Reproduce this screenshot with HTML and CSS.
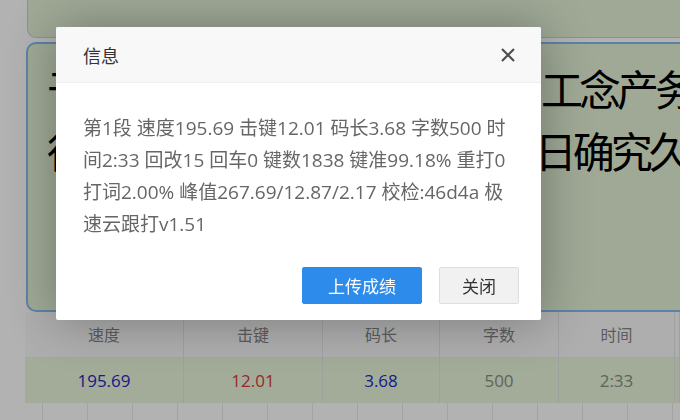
FILE: index.html
```html
<!DOCTYPE html>
<html lang="zh-CN">
<head>
    <meta charset="UTF-8">
    <title>极速云跟打</title>
    <link rel="stylesheet" href="styles.css">
</head>
<body>
  <div class="page">
    <div class="top-card"></div>

    <div class="typing-area">于是他们把这件事情都交给了工念产务发展<br>得到的结果并不是那么好mm日确究久的</div>

    <div class="score-table">
      <div class="cell head">速度</div>
      <div class="cell head">击键</div>
      <div class="cell head">码长</div>
      <div class="cell head">字数</div>
      <div class="cell head">时间</div>
      <div class="cell head"></div>
      <div class="cell blue">195.69</div>
      <div class="cell red">12.01</div>
      <div class="cell blue">3.68</div>
      <div class="cell grey">500</div>
      <div class="cell grey">2:33</div>
      <div class="cell grey"></div>
    </div>

    <div class="history-row">
      <span></span><span></span><span></span><span></span><span></span>
      <span></span><span></span><span></span><span></span><span></span>
      <span></span><span></span><span></span><span></span><span></span>
    </div>
  </div>

  <!-- layer popup -->
  <div class="shade"></div>
  <div class="layer">
    <div class="layer-title">
      <span class="layer-name">信息</span>
      <span class="layer-close">
        <svg viewBox="0 0 16 16" width="16" height="16">
          <path d="M2 2L14 14M14 2L2 14" stroke="#4d4d4d" stroke-width="2.2" fill="none"/>
        </svg>
      </span>
    </div>
    <div class="layer-content">第1段 速度195.69 击键12.01 码长3.68 字数500 时间2:33 回改15 回车0 键数1838 键准99.18% 重打0 打词2.00% 峰值267.69/12.87/2.17 校检:46d4a 极速云跟打v1.51</div>
    <div class="layer-btns">
      <a class="btn btn-primary">上传成绩</a>
      <a class="btn">关闭</a>
    </div>
  </div>
</body>
</html>
```

FILE: styles.css
```css
* {
    box-sizing: border-box;
    margin: 0;
    padding: 0;
}

body {
    background: #ffffff;
    font-family: 'Open Sans', 'Noto Sans CJK SC', sans-serif;
    width: 680px;
    height: 420px;
    overflow: hidden;
}

.page {
    padding-left: 25px;
}

.top-card {
    margin-left: 2px;
    height: 38px;
    background: #e4f2d7;
    border: 1px solid #cfcfcf;
    border-top: none;
    border-right: none;
    border-radius: 0 0 0 9px;
}

.typing-area {
    margin-top: 4px;
    margin-left: 1px;
    height: 270px;
    background: #e4f2d7;
    border: 2px solid #86bbef;
    border-right: none;
    border-radius: 10px 0 0 10px;
    padding: 13px 0 0 19px;
    font-family: 'Noto Sans CJK SC', sans-serif;
    font-size: 42px;
    letter-spacing: -4px;
    line-height: 62px;
    color: #000;
    white-space: nowrap;
    overflow: hidden;
}

.score-table {
    display: grid;
    grid-template-columns: 159px 139px 117px 119px 116px 1fr;
}

.cell {
    border-right: 1px solid #e6e6e6;
    text-align: center;
    font-size: 16px;
}

.cell.head {
    height: 46px;
    line-height: 46px;
    background: #fafafa;
    color: #858585;
    border-bottom: 1px solid #ececec;
}

.cell.blue,
.cell.red,
.cell.grey {
    height: 45px;
    line-height: 45px;
    background: #e8f6dc;
    font-size: 17px;
}

.cell.blue { color: #2626c4; }
.cell.red { color: #d83a3a; }
.cell.grey { color: #8a8f86; }

.history-row {
    display: flex;
    margin-left: 17px;
    height: 20px;
}

.history-row span {
    width: 45px;
    flex-shrink: 0;
    border-left: 1px solid #eaeaea;
}

.shade {
    position: fixed;
    top: 0;
    left: 0;
    right: 0;
    bottom: 0;
    background: rgba(0, 0, 0, 0.3);
}

.layer {
    position: absolute;
    left: 56px;
    top: 27px;
    width: 485px;
    background: #fff;
    border-radius: 2px;
    box-shadow: 1px 1px 50px rgba(0, 0, 0, 0.3);
    overflow: hidden;
}

.layer-title {
    display: flex;
    align-items: center;
    justify-content: space-between;
    height: 56px;
    padding: 0 25px 0 27px;
    background: #f8f8f8;
    border-bottom: 1px solid #eee;
    font-family: 'Noto Sans CJK SC', sans-serif;
    font-size: 18px;
    color: #333;
}

.layer-close {
    width: 16px;
    height: 16px;
    line-height: 0;
}

.layer-content {
    padding: 29px 26px 0 27px;
    height: 184px;
    font-size: 19px;
    line-height: 32px;
    color: #666;
    word-break: break-all;
}

.layer-btns {
    padding: 0 22px 16px;
    text-align: right;
    font-size: 0;
}

.btn {
    display: inline-block;
    height: 37px;
    line-height: 35px;
    padding: 0 22px;
    margin-left: 17px;
    border: 1px solid #dedede;
    background: #f1f1f1;
    color: #333;
    border-radius: 2px;
    font-family: 'Noto Sans CJK SC', sans-serif;
    font-size: 17px;
    cursor: pointer;
}

.btn-primary {
    padding: 0 25px;
    border-color: #2d8ceb;
    background: #2d8ceb;
    color: #fff;
}
```
